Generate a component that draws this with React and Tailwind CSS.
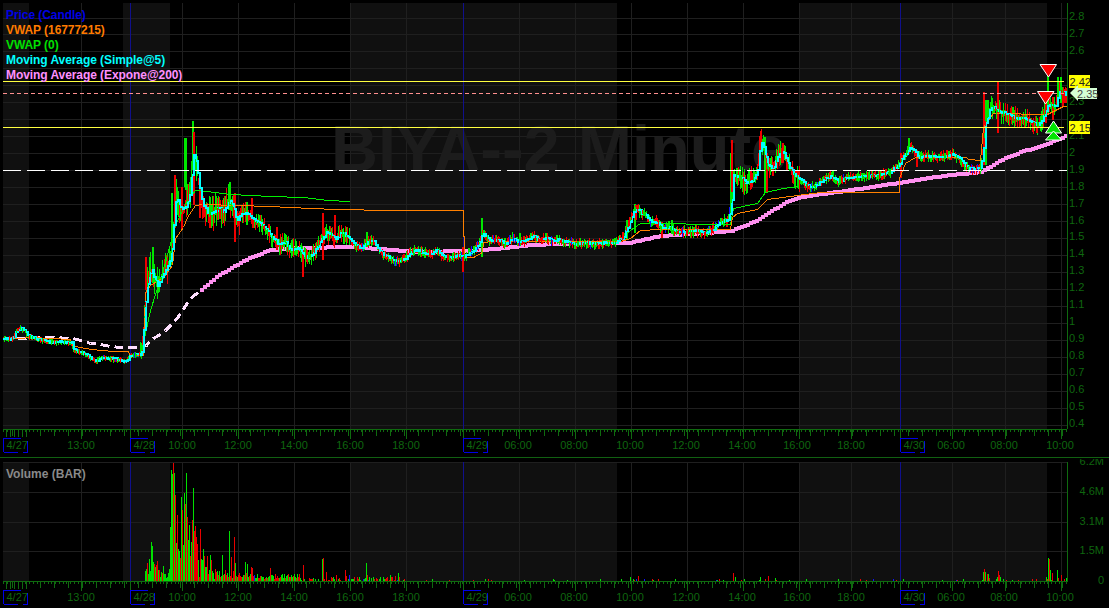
import React from 'react'

// all series are traced in pixels of the chart, one candle per pixel
const PRICE = [[3,339],[10,339],[13,338],[16,331],[20,328],[24,330],[28,336],[33,338],[45,341],[50,342],[60,342],[71,343],[73,350],[77,351],[85,354],[90,358],[96,361],[100,358],[106,358],[113,359],[120,360],[125,362],[128,358],[132,355],[138,355],[141,352],[143,330],[146,290],[150,268],[153,276],[157,285],[160,280],[165,270],[170,258],[172,240],[174,210],[176,195],[178,205],[182,210],[186,205],[190,190],[192,160],[193,155],[196,165],[198,180],[200,195],[203,205],[208,215],[213,212],[218,208],[224,212],[228,200],[232,205],[236,222],[240,215],[246,212],[250,218],[256,222],[262,225],[270,235],[276,242],[280,245],[285,242],[290,250],[297,248],[302,255],[306,258],[312,255],[318,245],[325,232],[330,235],[335,240],[340,232],[345,235],[350,240],[354,245],[360,248],[366,243],[372,240],[380,252],[388,258],[396,262],[405,258],[410,252],[416,250],[422,252],[430,255],[436,250],[442,256],[450,258],[458,255],[463,257],[467,255],[473,250],[478,246],[482,232],[486,237],[490,242],[497,240],[505,244],[512,238],[518,242],[525,241],[532,236],[538,240],[545,238],[552,241],[558,240],[565,242],[575,244],[585,243],[595,244],[605,243],[615,242],[622,238],[628,225],[633,212],[636,208],[640,212],[645,215],[650,222],[656,222],[662,228],[668,227],[676,231],[685,232],[695,231],[705,233],[712,230],[720,222],[728,220],[731,200],[733,175],[738,177],[745,182],[752,180],[757,170],[760,140],[763,148],[767,165],[772,168],[778,155],[782,152],[786,160],[790,170],[797,178],[803,182],[808,187],[815,186],[822,180],[830,176],[838,182],[845,178],[855,177],[865,176],[880,175],[890,172],[898,165],[904,155],[910,147],[913,150],[918,157],[927,156],[936,157],[945,156],[952,154],[958,158],[965,167],[975,170],[980,168],[983,147],[985,123],[990,107],[997,110],[1003,113],[1013,117],[1027,120],[1038,125],[1043,117],[1048,103],[1055,107],[1058,93],[1063,92],[1066,97]]

const SPIKES = [[193,121,170,'g'],[194,132,205,'r'],[186,138,190,'g'],[175,175,228,'r'],[172,193,243,'g'],[182,187,230,'r'],[185,138,187,'g'],[153,247,283,'g'],[146,257,290,'r'],[200,187,218,'r'],[210,212,228,'r'],[230,182,210,'g'],[235,193,242,'r'],[252,198,223,'r'],[247,202,225,'g'],[277,227,250,'r'],[303,250,277,'r'],[323,213,260,'r'],[335,215,240,'r'],[367,232,247,'g'],[482,218,257,'g'],[463,247,272,'r'],[635,204,233,'g'],[627,220,240,'g'],[520,233,246,'g'],[732,140,192,'r'],[731,153,210,'g'],[760,136,160,'r'],[765,137,193,'g'],[767,153,193,'r'],[783,143,163,'r'],[636,205,220,'r'],[662,222,238,'r'],[672,220,234,'g'],[793,167,183,'r'],[796,170,175,'r'],[798,170,175,'r'],[833,170,180,'g'],[901,153,178,'r'],[909,138,150,'g'],[917,153,167,'r'],[984,92,165,'r'],[986,100,165,'g'],[998,82,133,'r'],[988,100,120,'g'],[1013,107,123,'g'],[1037,123,133,'r'],[1048,75,113,'g'],[1046,100,123,'r'],[1053,97,120,'r'],[1058,77,107,'g'],[1061,77,103,'g'],[1063,93,107,'r'],[1066,95,103,'r']]

const MA200_DASHED = [[3,338],[50,337],[73,338],[80,340],[90,343],[100,344],[110,346],[120,347],[140,347],[146,345],[150,340],[158,335],[165,330],[172,323],[178,316],[190,298],[200,290]]
const MA200 = [[200,290],[215,277],[237,264],[250,257],[270,250],[300,248],[350,247],[390,250],[420,252],[463,251],[493,249],[530,245],[580,243],[627,243],[660,236],[690,234],[730,231],[755,221],[783,203],[800,197],[850,190],[890,184],[920,179],[950,175],[980,172],[1000,160],[1020,152],[1043,145],[1067,135]]

const VWAP_ORANGE = [[3,339],[20,338],[30,337],[50,338],[70,339],[72,345],[75,346],[85,348],[100,350],[115,351],[128,351],[130,358],[133,355],[143,355],[145,292],[150,285],[163,277],[172,265],[175,238],[183,227],[187,217],[195,205],[203,204],[270,206],[288,207],[313,208],[333,209],[393,210],[463,210],[463,236],[464,236],[464,257],[473,257],[482,252],[483,242],[493,241],[620,241],[630,238],[640,230],[660,229],[730,229],[732,217],[737,213],[757,209],[767,199],[797,195],[820,192],[899,192],[899,178],[905,163],[915,157],[966,157],[968,159],[980,160],[983,127],[993,113],[1047,114],[1063,106],[1066,106]]
const VWAP_GREEN_A = [[141,352],[150,310],[165,262],[175,225],[187,200],[195,190],[207,191],[230,194],[270,196],[303,197],[327,200],[350,201]]
const VWAP_GREEN_B = [[620,240],[630,230],[640,223],[730,224],[733,208],[757,203],[765,192],[783,188],[798,186]]

const VOLUME = [[145,10,'g'],[146,12,'g'],[147,18,'r'],[149,22,'g'],[150,10,'g'],[151,39,'g'],[152,35,'g'],[153,19,'g'],[154,17,'r'],[155,14,'g'],[156,16,'r'],[157,20,'r'],[158,11,'g'],[159,11,'r'],[161,9,'g'],[162,8,'r'],[163,15,'g'],[164,7,'g'],[165,7,'g'],[167,4,'g'],[168,8,'g'],[169,12,'g'],[170,54,'g'],[171,111,'g'],[172,107,'g'],[173,118,'r'],[174,108,'g'],[175,86,'r'],[176,38,'g'],[177,66,'r'],[178,32,'g'],[179,30,'g'],[180,23,'r'],[181,84,'g'],[182,71,'r'],[183,36,'g'],[184,88,'g'],[185,77,'r'],[186,108,'g'],[187,64,'r'],[188,41,'g'],[189,56,'g'],[190,25,'r'],[191,39,'g'],[192,61,'r'],[193,93,'g'],[194,50,'r'],[195,55,'r'],[196,44,'r'],[197,37,'r'],[198,21,'g'],[200,52,'r'],[201,22,'g'],[202,21,'g'],[203,32,'g'],[204,25,'r'],[205,14,'g'],[206,14,'g'],[207,25,'r'],[208,7,'r'],[209,11,'g'],[210,26,'g'],[211,21,'r'],[212,10,'g'],[213,8,'g'],[215,12,'r'],[216,9,'r'],[217,10,'g'],[218,6,'r'],[219,10,'g'],[220,4,'r'],[222,26,'g'],[224,7,'g'],[225,11,'r'],[227,8,'g'],[229,50,'g'],[230,5,'r'],[231,24,'r'],[233,10,'r'],[235,18,'g'],[234,44,'r'],[238,6,'r'],[239,8,'r'],[242,4,'g'],[243,6,'g'],[245,19,'g'],[246,8,'r'],[247,17,'g'],[249,5,'r'],[250,7,'g'],[251,14,'r'],[252,13,'r'],[254,6,'b'],[258,3,'r'],[260,5,'r'],[263,4,'g'],[270,13,'r'],[277,5,'r'],[281,6,'g'],[285,3,'r'],[303,16,'r'],[322,22,'g'],[323,23,'r'],[326,9,'r'],[333,4,'g'],[336,6,'r'],[345,11,'r'],[346,5,'r'],[349,6,'b'],[366,18,'g'],[367,6,'r'],[373,4,'g'],[376,3,'r'],[380,4,'g'],[390,6,'g'],[395,5,'r'],[398,8,'g'],[630,4,'g'],[638,5,'r'],[733,8,'r'],[735,4,'g'],[760,4,'g'],[768,5,'r'],[775,3,'g'],[983,9,'g'],[984,12,'r'],[985,9,'g'],[987,7,'r'],[988,7,'g'],[989,3,'r'],[996,2,'g'],[997,4,'g'],[998,10,'r'],[999,6,'r'],[1000,4,'g'],[1003,2,'g'],[1006,1,'r'],[1012,1,'g'],[1046,4,'g'],[1048,23,'g'],[1049,22,'r'],[1050,11,'g'],[1052,8,'r'],[1057,11,'g'],[1058,3,'r'],[1061,6,'r'],[1064,2,'r'],[1066,3,'g']]

const GRID_X = [81.5,182.5,238.5,294.5,350.5,406.5,519.5,575.5,631.5,687.5,743.5,799.5,851.5,952.5,1005.5,1061.5]
const DAY_X = [130.5,463.5,900.5]
const SHADE = [[3,26],[123,47],[350,267],[799,248]]
const PRICE_TICKS = Array.from({ length: 25 }, (_, i) => (2.8 - i * 0.1))

const TIME_LABELS = [['13:00',81],['10:00',182],['12:00',238],['14:00',294],['16:00',350],['18:00',406],['06:00',518],['08:00',574],['10:00',630],['12:00',686],['14:00',742],['16:00',797],['18:00',851],['06:00',951],['08:00',1004],['10:00',1060]]
const DAYS = [['4/27',3],['4/28',130],['4/29',463],['4/30',900]]

const LEGEND = [
  ['Price (Candle)', 'text-[#0000e6]'],
  ['VWAP (16777215)', 'text-[#ff7b00]'],
  ['VWAP (0)', 'text-[#00e000]'],
  ['Moving Average (Simple@5)', 'text-[#00ffff]'],
  ['Moving Average (Expone@200)', 'text-[#ff90ff]'],
]

function line(points) {
  return points.map((p, i) => (i ? 'L' : 'M') + (p[0] + 0.5) + ' ' + (p[1] + 0.5)).join(' ')
}

function valueAt(points, x) {
  for (let i = 1; i < points.length; i++) {
    const [x0, y0] = points[i - 1]
    const [x1, y1] = points[i]
    if (x <= x1) return x1 === x0 ? y1 : y0 + ((y1 - y0) * (x - x0)) / (x1 - x0)
  }
  return points[points.length - 1][1]
}

// blocky thick line, the way the chart paints it
function stairs(points, step) {
  let d = ''
  const end = points[points.length - 1][0]
  for (let x = points[0][0]; x < end; x += step) {
    d += `M${x} ${Math.round(valueAt(points, x))}h${step + 1}`
  }
  return d
}

function noiseAmount(x) {
  if (x < 140) return 2
  if (x < 240) return 18
  if (x < 350) return 10
  if (x < 630) return 5
  if (x < 730) return 6
  if (x < 800) return 13
  if (x < 980) return 5
  return 11
}

let seed = 7
function rnd() {
  seed = (seed * 16807) % 2147483647
  return seed / 2147483647
}

function buildCandles() {
  const under = { g: '', r: '', b: '' }
  const over = { g: '', r: '', b: '' }
  for (let x = 3; x < 1067; x++) {
    const y = valueAt(PRICE, x)
    const amount = noiseAmount(x)
    const up = rnd() > 0.48
    const kind = rnd() < 0.05 && amount < 7 ? 'b' : up ? 'g' : 'r'
    const top = Math.round(y - 1 - rnd() * amount)
    const bottom = Math.round(y + 1 + rnd() * amount)
    under[kind] += `M${x + 0.5} ${top}V${bottom}`
    // some bodies stay on top of the average line
    if (rnd() < 0.35) {
      over[kind] += `M${x + 0.5} ${Math.round(y - rnd() * 3)}V${Math.round(y + 1 + rnd() * 3)}`
    }
  }
  return { under, over }
}

function buildSpikes() {
  const paths = { g: '', r: '', b: '' }
  SPIKES.forEach(([x, top, bottom, kind]) => {
    paths[kind] += `M${x} ${top}V${bottom}`
  })
  return paths
}

// the 5-bar average as 3px columns, so steep parts stay solid
function buildTrace() {
  let d = ''
  let prev = Math.round(valueAt(PRICE, 3))
  for (let x = 3; x < 1067; x += 2) {
    const y = Math.round(valueAt(PRICE, x) + (rnd() - 0.5) * 2)
    d += `M${x + 1} ${Math.min(prev, y) - 1}V${Math.max(prev, y) + 1}`
    prev = y
  }
  return d
}

function buildVolume() {
  const paths = { g: '', r: '', b: '' }
  const used = {}
  VOLUME.forEach(([x, h, kind]) => {
    used[x] = true
    paths[kind] += `M${x + 0.5} 581V${581 - h}`
  })
  for (let x = 145; x < 1067; x++) {
    if (used[x]) continue
    if (x < 300) {
      const kind = rnd() < 0.5 ? 'g' : 'r'
      paths[kind] += `M${x + 0.5} 581V${581 - 2 - Math.round(rnd() * 5)}`
      continue
    }
    if (rnd() > (x < 400 ? 0.5 : 0.1)) continue
    if (x > 400 && x < 620 && rnd() > 0.5) continue
    const h = 1 + Math.round(rnd() * (x < 400 ? 3 : 1))
    const r = rnd()
    const kind = r < 0.45 ? 'g' : r < 0.93 ? 'r' : 'b'
    paths[kind] += `M${x + 0.5} 581V${581 - h}`
  }
  return paths
}

const CANDLES = buildCandles()
const SPIKE_PATHS = buildSpikes()
const TRACE = buildTrace()
const VOLUME_BARS = buildVolume()

function ticks(y) {
  let d = ''
  for (let i = 0; i * 3.73 < 1064; i++) d += `M${Math.round(3 + i * 3.73) + 0.5} ${y}v3`
  for (let i = 0; i * 14 < 1064; i++) d += `M${Math.round(12 + i * 14) + 0.5} ${y}v7`
  GRID_X.forEach(x => { d += `M${x} ${y}v10` })
  DAY_X.forEach(x => { d += `M${x} ${y}v10` })
  for (let x = 6; x < 30; x += 4) d += `M${x + 0.5} ${y}v8`
  return d
}

function Grid({ ys, top, bottom }) {
  return (
    <g shapeRendering="crispEdges">
      {SHADE.map(([x, w]) => <rect key={x} x={x} y={top} width={w} height={bottom - top} fill="#101010" />)}
      {ys.map(y => <path key={y} d={`M3 ${y}H1067`} stroke="#1f1f1f" />)}
      {GRID_X.map(x => <path key={x} d={`M${x} ${top}V${bottom}`} stroke="#1f1f1f" />)}
    </g>
  )
}

function TimeAxis({ axisY }) {
  return (
    <g>
      <path d={`M3 ${axisY + 0.5}H1067${ticks(axisY)}`} stroke="#0f6a0f" shapeRendering="crispEdges" />
      {TIME_LABELS.map(([t, x]) => (
        <text key={t + x} x={x} y={axisY + 20} textAnchor="middle" fill="#0f660f" className="text-[11px]">{t}</text>
      ))}
      {DAYS.map(([t, x]) => (
        <g key={t}>
          <path d={`M${x + 0.5} ${axisY + 9}H${x + 18}M${x + 0.5} ${axisY + 9}V${axisY + 23}M${x + 0.5} ${axisY + 23.5}H${x + 15}M${x + 24.5} ${axisY + 12}V${axisY + 23.5}H${x + 20}`} stroke="#0000e6" fill="none" shapeRendering="crispEdges" />
          <text x={x + 3.5} y={axisY + 20} fill="#0f660f" className="text-[11px]">{t}</text>
        </g>
      ))}
    </g>
  )
}

function DayLines({ top, bottom }) {
  return (
    <g shapeRendering="crispEdges">
      {DAY_X.map(x => <path key={x} d={`M${x} ${top}V${bottom}`} stroke="#10108c" />)}
    </g>
  )
}

function Triangle({ points }) {
  return <polygon points={points} fill="#ff0000" stroke="#ffffff" strokeWidth="1" />
}

function PriceChart() {
  const ys = PRICE_TICKS.map((_, i) => 17.5 + i * 16.96).map(y => Math.round(y) + 0.5)
  return (
    <svg width="1109" height="457" className="block">
      <Grid ys={ys} top={3} bottom={429} />
      <text x="331" y="171" fill="#1c1c1c" className="text-[65px] font-bold">BIYA--2 Minute</text>
      <DayLines top={3} bottom={429} />

      <g shapeRendering="crispEdges" fill="none">
        <path d={stairs(MA200, 3)} stroke="#ff90f0" strokeWidth="4" />
        <path d={line(MA200_DASHED)} stroke="#ffe0ff" strokeWidth="3" strokeDasharray="9 5" />
        <path d={CANDLES.under.g} stroke="#00e600" />
        <path d={CANDLES.under.r} stroke="#f00000" />
        <path d={CANDLES.under.b} stroke="#1010ff" />
        <path d={SPIKE_PATHS.g} stroke="#00e600" strokeWidth="2" />
        <path d={SPIKE_PATHS.r} stroke="#f00000" strokeWidth="2" />
        <path d={line(VWAP_GREEN_A)} stroke="#00f000" />
        <path d={line(VWAP_GREEN_B)} stroke="#00f000" />
        <path d={line(VWAP_ORANGE)} stroke="#ff8000" />
        <path d={TRACE} stroke="#00ffff" strokeWidth="2" />
        <path d={CANDLES.over.g} stroke="#00e600" />
        <path d={CANDLES.over.r} stroke="#f00000" />
        <path d={CANDLES.over.b} stroke="#1010ff" />
      </g>

      <g shapeRendering="crispEdges">
        <path d="M3 81.5H1064" stroke="#ffff40" />
        <path d="M3 93.5H1067" stroke="#ff8f8f" strokeDasharray="4 3" />
        <path d="M3 127.5H1064" stroke="#ffff40" />
        <path d="M3 170.5H1067" stroke="#ffffff" strokeDasharray="18 6" />
      </g>

      <Triangle points="1040,64.5 1056.5,64.5 1048.5,77" />
      <Triangle points="1037.5,91.5 1054,91.5 1045.5,104" />
      <polygon points="1053.5,121 1061.5,133 1045.5,133" fill="#00e600" stroke="#ffffff" />
      <polygon points="1053.5,131 1061.5,140 1045.5,140" fill="#00e600" stroke="#ffffff" />

      <path d="M1067.5 3V429" stroke="#0f6a0f" shapeRendering="crispEdges" />
      {PRICE_TICKS.map((p, i) => i === 3 ? null : (
        <text key={i} x="1069" y={20 + i * 16.96} fill="#0f660f" className="text-[11px]">{p.toFixed(1).replace(/\.0$/, '')}</text>
      ))}

      <rect x="1069" y="75" width="21" height="13" fill="#ffff00" />
      <text x="1069.5" y="85.5" fill="#222222" className="text-[11px]">2.42</text>
      <rect x="1069" y="121" width="21" height="13" fill="#ffff00" />
      <text x="1069.5" y="131.5" fill="#222222" className="text-[11px]">2.15</text>
      <polygon points="1070,93 1078,85 1078,88 1097,88 1097,99 1078,99 1078,101" fill="#d4ffd4" />
      <text x="1077" y="97.5" fill="#444444" className="text-[11px]">2.35</text>

      <TimeAxis axisY={429} />
    </svg>
  )
}

function VolumeChart() {
  return (
    <svg width="1109" height="149" viewBox="0 459 1109 149" className="block">
      <Grid ys={[462.5, 492.5, 522.5, 551.5]} top={462} bottom={581} />
      <DayLines top={462} bottom={581} />
      <g shapeRendering="crispEdges" fill="none">
        <path d={VOLUME_BARS.g} stroke="#00e000" />
        <path d={VOLUME_BARS.r} stroke="#e80000" />
        <path d={VOLUME_BARS.b} stroke="#1010ff" />
      </g>
      <path d="M1067.5 462V582" stroke="#0f6a0f" shapeRendering="crispEdges" />
      {[['6.2M', 465], ['4.6M', 495], ['3.1M', 525], ['1.5M', 554], ['0', 584]].map(([t, y]) => (
        <text key={t} x="1104" y={y} textAnchor="end" fill="#0f660f" className="text-[11px]">{t}</text>
      ))}
      <TimeAxis axisY={581} />
    </svg>
  )
}

export default function App() {
  return (
    <div className="flex flex-col w-[1109px] h-[608px] overflow-hidden bg-black font-['Liberation_Sans',Arial,sans-serif]">
      <div className="relative">
        <PriceChart />
        <div className="absolute left-[6px] top-[8px] flex flex-col text-xs font-bold leading-[15px] tracking-[-0.07px]">
          {LEGEND.map(([label, color]) => <div key={label} className={color}>{label}</div>)}
        </div>
      </div>
      <div className="h-px bg-[#116011]" />
      <div className="h-px bg-black" />
      <div className="relative">
        <VolumeChart />
        <div className="absolute left-[6px] top-[8px] text-xs font-bold leading-[15px] text-[#8a8a8a]">Volume (BAR)</div>
      </div>
    </div>
  )
}
